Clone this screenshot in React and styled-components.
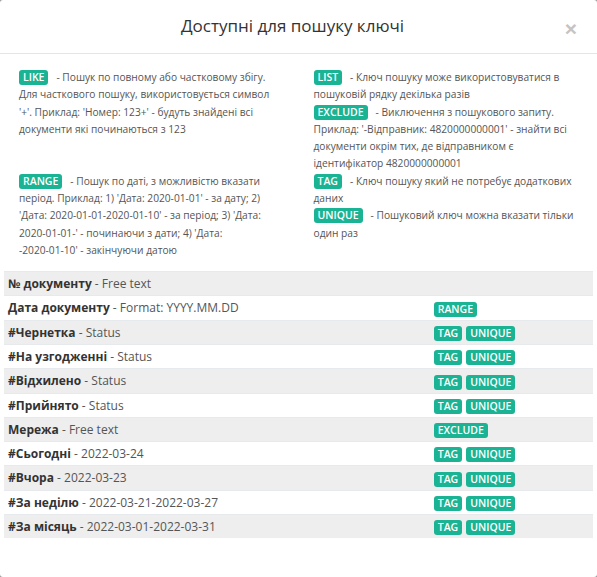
import React from "react";
import styled, { createGlobalStyle } from "styled-components";

const Global = createGlobalStyle`
  html, body {
    margin: 0;
    padding: 0;
    background: #9a9a9a;
  }
  body {
    font-family: "Open Sans", "Liberation Sans", sans-serif;
  }
`;

const Modal = styled.div`
  width: 597px;
  min-height: 577px;
  background: #fff;
  border-radius: 3px;
  box-sizing: border-box;
`;

const Header = styled.div`
  position: relative;
  height: 53px;
  border-bottom: 1px solid #e5e5e5;
  display: flex;
  align-items: center;
  justify-content: center;
  padding-right: 12px;
`;

const Title = styled.h4`
  margin: 0;
  font-size: 17px;
  font-weight: 500;
  color: #333;
  padding-bottom: 3px;
`;

const Close = styled.button`
  position: absolute;
  right: 20px;
  top: 18px;
  border: 0;
  background: none;
  padding: 0;
  font-family: "Liberation Sans", sans-serif;
  font-size: 21px;
  font-weight: 700;
  line-height: 1;
  color: #c4c4c4;
  cursor: pointer;
`;

const Body = styled.div`
  padding: 15px 4px 4px;
`;

const Legend = styled.div`
  display: grid;
  grid-template-columns: 1fr 1fr;
  font-size: 10.2px;
  line-height: 17.3px;
  color: #555;
`;

const Cell = styled.div`
  padding: 0 15px;
`;

const Item = styled.div``;

const NoWrap = styled.span`
  white-space: nowrap;
`;

const Badge = styled.span`
  display: inline-block;
  background: #1ab394;
  color: #fff;
  font-size: 10.5px;
  font-weight: 600;
  line-height: 11px;
  padding: 2px 4px 2px;
  border-radius: 3px;
  vertical-align: ${(p) => (p.table ? "middle" : "baseline")};
  margin-right: ${(p) => (p.table ? "4px" : "0")};
`;

const Table = styled.table`
  width: 100%;
  margin-top: 12px;
  border-collapse: collapse;
  font-size: 12px;
  line-height: 17.14px;
  color: #555;
`;

const Row = styled.tr`
  background: ${(p) => (p.striped ? "#eeeeee" : "#fff")};
  border-top: 1px solid #e7eaec;
`;

const KeyCell = styled.td`
  width: 71.6%;
  padding: 3px 4px 3px 4px;
  vertical-align: middle;
`;

const TagCell = styled.td`
  padding: 3px 4px 3px 8px;
  vertical-align: middle;
`;

const Key = styled.b`
  color: #333;
  font-weight: 700;
`;

const rows = [
  ["№ документу", "Free text", []],
  ["Дата документу", "Format: YYYY.MM.DD", ["RANGE"]],
  ["#Чернетка", "Status", ["TAG", "UNIQUE"]],
  ["#На узгодженні", "Status", ["TAG", "UNIQUE"]],
  ["#Відхилено", "Status", ["TAG", "UNIQUE"]],
  ["#Прийнято", "Status", ["TAG", "UNIQUE"]],
  ["Мережа", "Free text", ["EXCLUDE"]],
  ["#Сьогодні", "2022-03-24", ["TAG", "UNIQUE"]],
  ["#Вчора", "2022-03-23", ["TAG", "UNIQUE"]],
  ["#За неділю", "2022-03-21-2022-03-27", ["TAG", "UNIQUE"]],
  ["#За місяць", "2022-03-01-2022-03-31", ["TAG", "UNIQUE"]],
];

const Def = ({ tag, children }) => (
  <Item>
    <Badge>{tag}</Badge>&nbsp;&nbsp; - {children}
  </Item>
);

export default function App() {
  return (
    <>
      <Global />
      <Modal>
        <Header>
          <Title>Доступні для пошуку ключі</Title>
          <Close>×</Close>
        </Header>
        <Body>
          <Legend>
            <Cell>
              <Def tag="LIKE">
                Пошук по повному або частковому збігу. Для часткового пошуку,
                використовується символ '+'. Приклад: 'Номер: 123+' - будуть
                знайдені всі документи які починаються з 123
              </Def>
            </Cell>
            <Cell>
              <Def tag="LIST">
                Ключ пошуку може використовуватися в пошуковій рядку декілька
                разів
              </Def>
              <Def tag="EXCLUDE">
                Виключення з пошукового запиту. Приклад: '-Відправник:
                4820000000001' - знайти всі документи окрім тих, де
                відправником є ідентифікатор 4820000000001
              </Def>
            </Cell>
            <Cell>
              <Def tag="RANGE">
                Пошук по даті, з можливістю вказати період. Приклад: 1) 'Дата:
                2020-01-01' - за дату; 2) 'Дата:{" "}
                <NoWrap>2020-01-01-2020-01-10'</NoWrap> - за період; 3)
                'Дата: <NoWrap>2020-01-01-'</NoWrap> - починаючи з дати; 4)
                'Дата: <NoWrap>-2020-01-10'</NoWrap> - закінчуючи датою
              </Def>
            </Cell>
            <Cell>
              <Def tag="TAG">Ключ пошуку який не потребує додаткових даних</Def>
              <Def tag="UNIQUE">Пошуковий ключ можна вказати тільки один раз</Def>
            </Cell>
          </Legend>
          <Table>
            <tbody>
              {rows.map(([key, value, tags], i) => (
                <Row key={key} striped={i % 2 === 0}>
                  <KeyCell>
                    <Key>{key}</Key> - {value}
                  </KeyCell>
                  <TagCell>
                    {tags.map((t) => (
                      <Badge table key={t}>
                        {t}
                      </Badge>
                    ))}
                  </TagCell>
                </Row>
              ))}
            </tbody>
          </Table>
        </Body>
      </Modal>
    </>
  );
}
